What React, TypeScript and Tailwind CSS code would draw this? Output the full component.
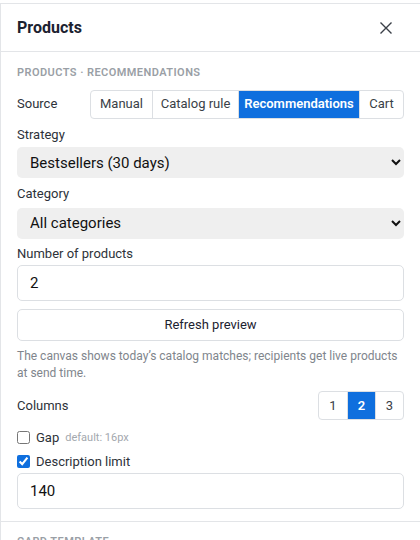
import React, { useState } from "react";

const SOURCES = [
  { label: "Manual", w: "w-[61px]" },
  { label: "Catalog rule", w: "w-[86px]" },
  { label: "Recommendations", w: "w-[121px]" },
  { label: "Cart", w: "w-[44px]" },
];
const BLUE = "bg-[#0f6fde]";

export default function App() {
  const [source, setSource] = useState("Recommendations");
  const [cols, setCols] = useState(2);
  const [gap, setGap] = useState(false);
  const [limit, setLimit] = useState(true);

  return (
    <div
      className="h-[540px] w-[420px] overflow-hidden bg-white pt-[3px]"
      style={{ fontFamily: "Roboto, 'Liberation Sans', sans-serif" }}
    >
      <div className="h-full border-l border-t border-[#e3e5e8]">
        <div className="flex h-[48px] items-center justify-between border-b border-[#e3e5e8] pl-4 pr-[28px]">
          <h1 className="text-[16px] font-bold text-[#1c2230]">Products</h1>
          <button className="text-[#3a3f47]" aria-label="Close">
            <svg width="12" height="12" viewBox="0 0 12 12" fill="none" stroke="currentColor" strokeWidth="1.4">
              <path d="M0.5 0.5l11 11M11.5 0.5l-11 11" />
            </svg>
          </button>
        </div>

        <div className="px-4 pt-[13px]">
          <div className="text-[11px] font-semibold uppercase tracking-[0.04em] text-[#9a9fa6]">
            Products · Recommendations
          </div>

          <div className="mt-[8px] flex items-center justify-between">
            <span className="text-[13px] text-[#2d3239]">Source</span>
            <div className="flex h-[29px] overflow-hidden rounded-[4px] border border-[#dcdfe3]">
              {SOURCES.map((s, i) => (
                <button
                  key={s.label}
                  onClick={() => setSource(s.label)}
                  className={`${s.w} text-[13px] ${i > 0 ? "border-l border-[#dcdfe3]" : ""} ${
                    source === s.label ? `${BLUE} font-semibold text-white` : "text-[#3a3f47]"
                  }`}
                >
                  {s.label}
                </button>
              ))}
            </div>
          </div>

          <label className="mt-[6px] block text-[13px] text-[#2d3239]">Strategy</label>
          <select className="mt-[3px] h-[31px] w-full rounded-[5px] bg-[#efefef] px-[9px] text-[15px] text-[#111]">
            <option>Bestsellers (30 days)</option>
            <option>New arrivals</option>
          </select>

          <label className="mt-[6px] block text-[13px] text-[#2d3239]">Category</label>
          <select className="mt-[4px] h-[31px] w-full rounded-[5px] bg-[#efefef] px-[9px] text-[15px] text-[#111]">
            <option>All categories</option>
          </select>

          <label className="mt-[5px] block text-[13px] text-[#2d3239]">Number of products</label>
          <input
            defaultValue="2"
            className="mt-[2px] h-[36px] w-full rounded-[5px] border border-[#dcdfe3] px-[12px] text-[15px] text-[#111]"
          />

          <button className="mt-[8px] h-[32px] w-full rounded-[5px] border border-[#dcdfe3] text-[13px] text-[#1c2230]">
            Refresh preview
          </button>

          <p className="mt-[7px] text-[12px] leading-[17px] text-[#80858c]">
            The canvas shows today’s catalog matches; recipients get live products at send time.
          </p>

          <div className="mt-[9px] flex items-center justify-between">
            <span className="text-[13px] text-[#2d3239]">Columns</span>
            <div className="flex h-[29px] overflow-hidden rounded-[4px] border border-[#dcdfe3]">
              {[1, 2, 3].map((n) => (
                <button
                  key={n}
                  onClick={() => setCols(n)}
                  className={`w-[28px] text-[13px] ${n > 1 ? "border-l border-[#dcdfe3]" : ""} ${
                    cols === n ? `${BLUE} font-semibold text-white` : "text-[#3a3f47]"
                  }`}
                >
                  {n}
                </button>
              ))}
            </div>
          </div>

          <label className="mt-[8px] flex items-center gap-[6px]">
            <input
              type="checkbox"
              checked={gap}
              onChange={(e) => setGap(e.target.checked)}
              className="m-0 h-[13px] w-[13px] accent-[#0f6fde]"
            />
            <span className="text-[13px] text-[#2d3239]">Gap</span>
            <span className="text-[11px] text-[#a3a8ae]">default: 16px</span>
          </label>

          <label className="mt-[4px] flex items-center gap-[6px]">
            <input
              type="checkbox"
              checked={limit}
              onChange={(e) => setLimit(e.target.checked)}
              className="m-0 h-[13px] w-[13px] accent-[#0f6fde]"
            />
            <span className="text-[13px] text-[#2d3239]">Description limit</span>
          </label>

          <input
            defaultValue="140"
            className="mt-[2px] h-[36px] w-full rounded-[5px] border border-[#dcdfe3] px-[12px] text-[15px] text-[#111]"
          />
        </div>

        <div className="mt-[12px] border-t border-[#e3e5e8] px-4 pt-[12px]">
          <div className="text-[11px] font-semibold uppercase tracking-[0.04em] text-[#9a9fa6]">Card template</div>
        </div>
      </div>
    </div>
  );
}
